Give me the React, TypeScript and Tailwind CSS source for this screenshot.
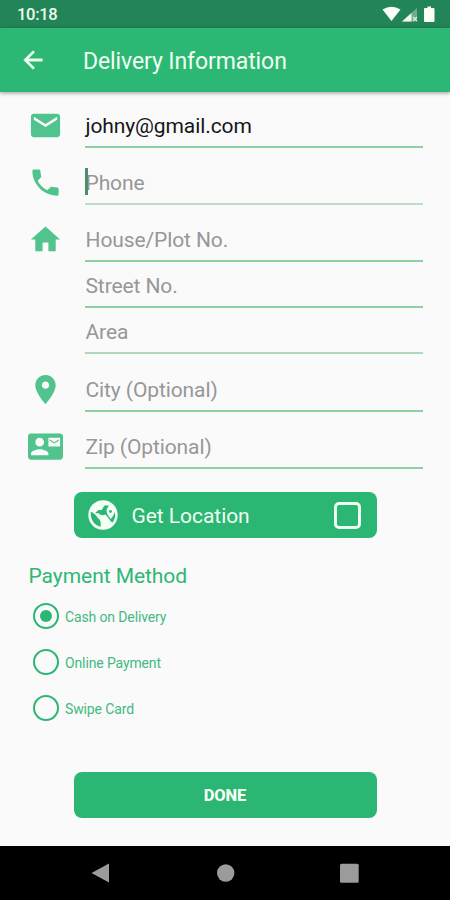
import React from "react";

type IconProps = { d: string; className?: string };

function MaterialIcon({ d, className = "" }: IconProps) {
  return (
    <svg viewBox="0 0 24 24" className={`size-[35px] shrink-0 fill-[#50c48c] ${className}`}>
      <path d={d} />
    </svg>
  );
}

const MAIL = "M20 4H4c-1.1 0-1.99.9-1.99 2L2 18c0 1.1.9 2 2 2h16c1.1 0 2-.9 2-2V6c0-1.100-.9-2-2-2zm0 4l-8 5-8-5V6l8 5 8-5v2z";
const PHONE = "M6.620 10.790c1.440 2.830 3.760 5.140 6.590 6.590l2.200-2.200c.27-.27.67-.36 1.020-.24 1.120.37 2.330.57 3.570.57.55 0 1 .45 1 1V20c0 .55-.45 1-1 1-9.390 0-17-7.610-17-17 0-.55.45-1 1-1h3.500c.55 0 1 .45 1 1 0 1.250.2 2.450.57 3.570.11.35.03.74-.25 1.020l-2.200 2.200z";
const HOME = "M10 20v-6h4v6h5v-8h3L12 3 2 12h3v8z";
const PLACE = "M12 2C8.130 2 5 5.130 5 9c0 5.250 7 13 7 13s7-7.750 7-13c0-3.870-3.130-7-7-7zm0 9.500c-1.380 0-2.500-1.120-2.500-2.500s1.120-2.500 2.500-2.500 2.500 1.120 2.500 2.500-1.120 2.500-2.500 2.500z";
const CONTACT = "M21 8V7l-3 2-3-2v1l3 2 3-2zm1-5H2C.9 3 0 3.900 0 5v14c0 1.100.9 2 2 2h20c1.100 0 1.990-.9 1.990-2L24 5c0-1.100-.9-2-2-2zM8 6c1.660 0 3 1.340 3 3s-1.340 3-3 3-3-1.340-3-3 1.340-3 3-3zm6 12H2v-1c0-2 4-3.100 6-3.100s6 1.100 6 3.100v1zm8-6h-8V6h8v6z";

type FieldProps = {
  icon?: string;
  text: string;
  height: string;
  filled?: boolean;
  focused?: boolean;
  line?: string;
};

function Field({ icon, text, height, filled, focused, line = "border-[#8fd0a3]" }: FieldProps) {
  return (
    <div className={`flex items-end pl-7 pr-[27px] ${height}`}>
      <div className="mb-[5px] w-[57px] shrink-0">{icon && <MaterialIcon d={icon} />}</div>
      <div className={`relative flex h-[45px] flex-1 items-center border-b-2 pt-1 text-[21px] leading-none tracking-[-0.1px] ${line} ${filled ? "text-[#161616]" : "text-[#979797]"}`}>
        {focused && <span className="absolute left-0 top-[8px] h-[27px] w-[3px] bg-[#4f8d6b]" />}
        <span className="ml-[0.5px]">{text}</span>
      </div>
    </div>
  );
}

function Radio({ label, checked }: { label: string; checked?: boolean }) {
  return (
    <div className="flex h-[46px] items-center pl-[33px] text-[#42b982]">
      <span className="flex size-[26px] items-center justify-center rounded-full border-2 border-[#2bb673]">
        {checked && <span className="size-[12px] rounded-full bg-[#2bb673]" />}
      </span>
      <span className="ml-[6px] mt-[2px] text-[14px] tracking-[-0.13px]">{label}</span>
    </div>
  );
}

export default function App() {
  return (
    <div className="flex h-[900px] w-[450px] flex-col overflow-hidden bg-[#fafafa] font-['Roboto',sans-serif]">
      <div className="flex h-7 shrink-0 items-center bg-[#228558] pl-[17px] pr-[14px] text-[#effbea]">
        <span className="mt-[3px] text-[16.500px] font-medium tracking-[-0.3px]">10:18</span>
        <svg viewBox="0 0 54 18" className="ml-auto h-[18px] w-[54px]">
          <path fill="#fcfff8" d="M0.500 4.500Q9.500-1 18.500 4.500L9.500 16z" />
          <path fill="#6fae8c" d="M20 16.500L35 3v13.500z" />
          <path fill="#effbea" d="M20 16.500L29.500 8v8.500z" />
          <path stroke="#d9eedc" strokeWidth="1.300" d="M31 12l4 4M35 12l-4 4" />
          <path fill="#fcfff8" d="M45.500 1.500h3.500v1.500h2.500q1 0 1 1v12q0 1-1 1h-8.500q-1 0-1-1V4q0-1 1-1h2.500z" />
        </svg>
      </div>
      <header className="z-10 flex h-16 shrink-0 items-center bg-[#2db775] pl-[19px] text-[#effff2] shadow-[0_1px_4px_rgba(0,0,0,0.4)]">
        <svg viewBox="0 0 24 24" className="size-[28px] fill-current stroke-current stroke-[0.4]">
          <path d="M20 11H7.830l5.590-5.590L12 4l-8 8 8 8 1.410-1.410L7.830 13H20v-2z" />
        </svg>
        <h1 className="ml-9 mt-[5px] text-[23px] tracking-[-0.1px]">Delivery Information</h1>
      </header>
      <main className="flex h-[754px] shrink-0 flex-col">
        <Field icon={MAIL} text="johny@gmail.com" height="h-14" filled />
        <Field icon={PHONE} text="Phone" height="h-[57px]" focused line="border-[#bce0c7]" />
        <Field icon={HOME} text="House/Plot No." height="h-[57px]" />
        <Field text="Street No." height="h-[46px]" />
        <Field text="Area" height="h-[46px]" line="border-[#b0d9bc]" />
        <Field icon={PLACE} text="City (Optional)" height="h-[58px]" />
        <Field icon={CONTACT} text="Zip (Optional)" height="h-[57px]" />
        <div className="mx-auto mt-[23px] flex h-[46px] w-[303px] shrink-0 items-center rounded-lg bg-[#2bb673] pl-[14px] pr-4 text-[#effff2]">
          <svg viewBox="0 0 30 30" className="size-[30px]">
            <circle cx="15" cy="15" r="14.700" fill="#f4fff5" />
            <path fill="#2bb673" d="M2.800 11.800C5 12.500 8 15 9.500 17.500c2 1.500 3.200 3.500 3.200 5.200v4C6.500 25.500 2 19.500 2.800 11.800z" />
            <path fill="#2bb673" d="M17 5.200l4 .6-2.200 3.200c-.8 3.500.8 6.500 3.900 10 2.200-2.500 3.800-4.800 4.100-7.500 1 4.800-.2 8.500-2.300 11-1.200-.8-2.400-1.600-3-3l-4-5-2.200.7-2.800-.4-2-1.600H7l3.500-3.200h3.200l1.500-2.500z" />
            <circle cx="22.500" cy="11.500" r="1.400" fill="#2bb673" />
          </svg>
          <span className="ml-[14px] mt-[3px] text-[21px] tracking-[-0.05px]">Get Location</span>
          <span className="ml-auto size-[27px] rounded-[5px] border-[3px] border-[#effff2]" />
        </div>
        <h2 className="mt-[22px] pl-[28.5px] text-[21px] leading-[32px] tracking-[-0.05px] text-[#2db775]">Payment Method</h2>
        <div className="mt-px flex flex-col">
          <Radio label="Cash on Delivery" checked />
          <Radio label="Online Payment" />
          <Radio label="Swipe Card" />
        </div>
        <button className="mx-auto mt-[41px] h-[46px] w-[303px] shrink-0 rounded-lg bg-[#2bb673] pt-[3px] text-[16.500px] font-extrabold tracking-[-0.1px] text-[#f4fff5]">
          DONE
        </button>
      </main>
      <nav className="flex flex-1 items-center bg-black">
        <svg viewBox="0 0 450 54" className="h-[54px] w-[450px] fill-[#9b9b9b]">
          <path d="M91.500 27L109 17.500v19z" />
          <circle cx="225.700" cy="27" r="8.700" />
          <rect x="340" y="17.700" width="18.700" height="19" rx="1.500" />
        </svg>
      </nav>
    </div>
  );
}
